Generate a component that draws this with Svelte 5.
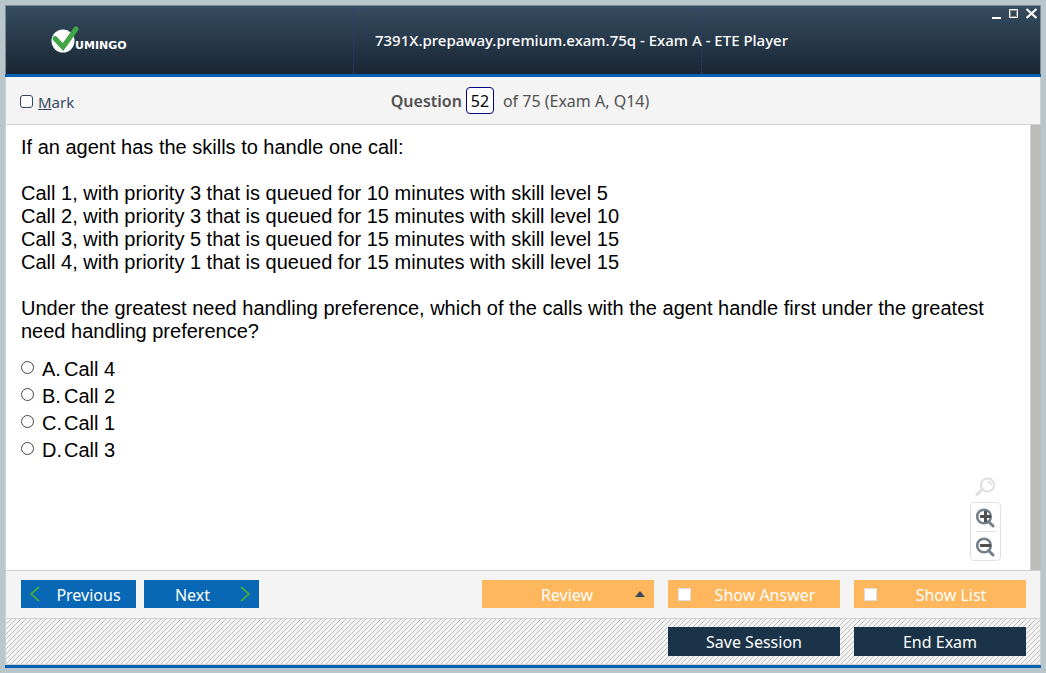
<script>
  let marked = $state(false);
  let question = $state('52');
  let answer = $state('');
  let showAnswer = $state(false);
  let showList = $state(false);

  const choices = [
    { id: 'A', text: 'Call 4' },
    { id: 'B', text: 'Call 2' },
    { id: 'C', text: 'Call 1' },
    { id: 'D', text: 'Call 3' }
  ];
  const calls = [
    'Call 1, with priority 3 that is queued for 10 minutes with skill level 5',
    'Call 2, with priority 3 that is queued for 15 minutes with skill level 10',
    'Call 3, with priority 5 that is queued for 15 minutes with skill level 15',
    'Call 4, with priority 1 that is queued for 15 minutes with skill level 15'
  ];
</script>

<div class="window">
  <header>
    <div class="brand">
      <svg width="30" height="30" viewBox="0 0 30 30" aria-hidden="true">
        <circle cx="12" cy="16" r="11.5" fill="#fff" />
        <path d="M4 13.500 L12 22 L25 4" fill="none" stroke="#43a548" stroke-width="5" stroke-linecap="round" />
      </svg>
      <span class="brand-name">UMINGO</span>
    </div>
    <h1>7391X.prepaway.premium.exam.75q - Exam A - ETE Player</h1>
    <div class="controls">
      <button aria-label="Minimize">
        <svg width="11" height="11" viewBox="0 0 11 11"><path d="M2 10h9" stroke="#fff" stroke-width="2" /></svg>
      </button>
      <button aria-label="Maximize">
        <svg width="11" height="11" viewBox="0 0 11 11"><path d="M1.500 1.500h8v8h-8z" fill="none" stroke="#fff" /><path d="M2.500 2.500h6v6h-6z" fill="none" stroke="#8b8782" /></svg>
      </button>
      <button aria-label="Close">
        <svg width="11" height="11" viewBox="0 0 11 11"><path d="M.5 1l10 9M10.500 1l-10 9" stroke="#fff" stroke-width="2.200" /></svg>
      </button>
    </div>
  </header>

  <div class="question-bar">
    <label class="mark"><input type="checkbox" bind:checked={marked} /><span><u>M</u>ark</span></label>
    <div class="position">
      <label for="question">Question</label>
      <input id="question" type="text" bind:value={question} />
      <span>of 75 (Exam A, Q14)</span>
    </div>
  </div>

  <main>
    <div class="content">
      <p>If an agent has the skills to handle one call:</p>
      <ul>
        {#each calls as call}<li>{call}</li>{/each}
      </ul>
      <p>Under the greatest need handling preference, which of the calls with the agent handle first under the greatest need handling preference?</p>
      <div class="choices" role="radiogroup" aria-label="Answers">
        {#each choices as choice}
          <label><input type="radio" name="answer" value={choice.id} bind:group={answer} /><span class="letter">{choice.id}.</span><span>{choice.text}</span></label>
        {/each}
      </div>
      <div class="zoom">
        <svg width="21" height="20" viewBox="0 0 21 20" aria-hidden="true">
          <circle cx="12.500" cy="8" r="6.600" fill="none" stroke="#dedede" stroke-width="2" />
          <path d="M12.500 4.500q3.500 .5 3.500 3.500" fill="none" stroke="#dedede" stroke-width="1.500" />
          <path d="M7 12.500L2 17.500" stroke="#dedede" stroke-width="3" stroke-linecap="round" />
        </svg>
        <div class="zoom-buttons">
          <button aria-label="Zoom in">
            <svg width="19" height="20" viewBox="0 0 19 20"><circle cx="8" cy="8.500" r="6.800" fill="none" stroke="#73808a" stroke-width="2.600" /><path d="M12.500 13.500l4.500 4.500" stroke="#73808a" stroke-width="3" stroke-linecap="round" /><path d="M4 8.500h11M9.500 3v11" stroke="#505050" stroke-width="3" /></svg>
          </button>
          <button aria-label="Zoom out">
            <svg width="19" height="20" viewBox="0 0 19 20"><circle cx="8" cy="8.500" r="6.800" fill="none" stroke="#73808a" stroke-width="2.600" /><path d="M12.500 13.500l4.500 4.500" stroke="#73808a" stroke-width="3" stroke-linecap="round" /><path d="M4 8.500h11" stroke="#505050" stroke-width="3" /></svg>
          </button>
        </div>
      </div>
    </div>
    <div class="track"></div>
  </main>

  <div class="toolbar">
    <button class="nav previous">
      <svg width="12" height="18" viewBox="0 0 12 18" aria-hidden="true"><path d="M10 2L2 9l8 7" fill="none" stroke="#43a548" stroke-width="2" /></svg>
      <span>Previous</span>
    </button>
    <button class="nav next">
      <span>Next</span>
      <svg width="12" height="18" viewBox="0 0 12 18" aria-hidden="true"><path d="M2 2l8 7-8 7" fill="none" stroke="#43a548" stroke-width="2" /></svg>
    </button>
    <div class="options">
      <button class="option">
        <span>Review</span>
        <svg width="10" height="6" viewBox="0 0 10 6" aria-hidden="true"><path d="M5 0l5 6H0z" fill="#34495e" /></svg>
      </button>
      <label class="option"><input type="checkbox" bind:checked={showAnswer} /><span>Show Answer</span></label>
      <label class="option"><input type="checkbox" bind:checked={showList} /><span>Show List</span></label>
    </div>
  </div>

  <footer>
    <button>Save Session</button>
    <button>End Exam</button>
  </footer>
</div>

<style>
  :global(body) {
    margin: 0;
    background: #b9c6cc;
  }
  * {
    box-sizing: border-box;
  }
  button {
    border: 0;
    padding: 0;
    background: none;
    font: inherit;
    color: inherit;
  }
  svg {
    display: block;
    flex: none;
  }
  .window {
    display: flex;
    flex-direction: column;
    min-height: calc(100vh - 10px);
    margin: 5px;
    font: 16px/20px "Noto Sans", sans-serif;
    background: #f4f4f4;
    border-bottom: 3px solid #0062b1;
  }
  header {
    display: grid;
    grid-template-columns: 1fr auto 1fr;
    align-items: center;
    height: 72px;
    color: #fff;
    --divider: repeating-linear-gradient(#2c3c86 0 1px, transparent 1px 2px);
    background:
      var(--divider) 33.65% 0 / 1px 100% no-repeat,
      var(--divider) 67.25% 0 / 1px 100% no-repeat,
      linear-gradient(#364c60, #192634);
    border-top: 1px solid #7a8b92;
    border-bottom: 3px solid #0062b1;
    box-shadow: inset 1px 0 #7a8b92, inset -1px 0 #7a8b92;
  }
  h1 {
    margin: 0;
    font: 500 15px/20px "Noto Sans", sans-serif;
    padding-left: 117px;
  }
  .brand {
    display: flex;
    align-items: flex-end;
    padding-left: 46px;
  }
  .brand-name {
    font: 700 11px/14px "DejaVu Sans", sans-serif;
    margin: 0 0 2px -6px;
  }
  .controls {
    display: flex;
    align-self: start;
    justify-content: flex-end;
    gap: 7px;
    padding: 2px 4px;
  }
  .question-bar,
  .toolbar,
  footer {
    border: solid #d0d0d0;
    border-width: 0 1px 1px;
  }
  .question-bar {
    display: grid;
    grid-template-columns: 1fr auto 1fr;
    align-items: center;
    height: 48px;
    padding: 0 20px 0 14px;
    color: #505050;
  }
  .mark {
    display: flex;
    align-items: center;
    gap: 5px;
    padding-top: 2px;
    color: #34495e;
    font-size: 15px;
  }
  .question-bar input {
    appearance: none;
    margin: 0;
    background: #fff;
  }
  .mark input {
    width: 13px;
    height: 13px;
    border: 1px solid #34495e;
    border-radius: 3px;
  }
  .position {
    display: flex;
    align-items: center;
    gap: 4px;
  }
  .position label {
    font-weight: 600;
  }
  .position input {
    width: 28px;
    height: 27px;
    padding: 0;
    margin-right: 5px;
    border: 1px solid #000080;
    border-radius: 4px;
    font: inherit;
    text-align: center;
  }
  main {
    display: flex;
    flex: 1;
    border-left: 1px solid #d0d0d0;
    background: #fff;
    border-bottom: 1px solid #d0d0d0;
  }
  .content {
    position: relative;
    flex: 1;
    padding: 11px 15px;
    font: 20px/23px "Liberation Sans", Arial, sans-serif;
    color: #000;
  }
  .track {
    width: 11px;
    background: #bdbcb8;
    border-left: 1px solid #d0d0d0;
  }
  p {
    margin: 0;
  }
  ul {
    list-style: none;
    margin: 23px 0;
    padding: 0;
  }
  .choices {
    display: grid;
    gap: 4px;
    margin-top: 15px;
  }
  .choices label {
    display: flex;
    align-items: center;
  }
  .choices input {
    appearance: none;
    width: 13px;
    height: 13px;
    margin: 0 8px 4px 0;
    border: 1px solid #444;
    border-radius: 50%;
  }
  .letter {
    width: 22px;
  }
  .zoom {
    position: absolute;
    right: 29px;
    bottom: 9px;
    display: grid;
    justify-items: center;
    gap: 5px;
  }
  .zoom-buttons {
    display: grid;
    padding: 0 5px;
    border: 1px solid #e2e2e2;
    border-radius: 4px;
  }
  .zoom-buttons button {
    padding: 5px 0 3px;
  }
  .zoom-buttons button + button {
    border-top: 1px solid #dedede;
  }
  .toolbar {
    display: flex;
    gap: 8px;
    height: 48px;
    padding: 9px 14px 10px 15px;
    color: #fff;
  }
  .nav {
    display: flex;
    align-items: center;
    width: 115px;
    height: 28px;
    padding: 0 8px;
    background: #0868b5;
  }
  .nav span,
  .option span {
    flex: 1;
    padding-top: 2px;
    text-align: center;
  }
  .previous span {
    padding-left: 8px;
  }
  .next span {
    padding-right: 6px;
  }
  .options {
    display: flex;
    gap: 14px;
    margin-left: auto;
  }
  .option {
    display: flex;
    align-items: center;
    width: 172px;
    height: 28px;
    padding: 0 9px;
    background: #ffb75d;
  }
  .option span {
    padding-left: 8px;
  }
  .option input {
    appearance: none;
    width: 13px;
    height: 13px;
    margin: 0 0 0 1px;
    background: #fff;
    border: 1px solid #ddd;
  }
  footer {
    display: flex;
    justify-content: flex-end;
    gap: 14px;
    padding: 8px 14px;
    background: url("data:image/svg+xml,%3Csvg xmlns='http://www.w3.org/2000/svg' width='5' height='5' shape-rendering='crispEdges'%3E%3Cpath d='M4 0h1v1h-1zM3 1h1v1h-1zM2 2h1v1h-1zM1 3h1v1h-1zM0 4h1v1h-1z' fill='%23c0c0c0'/%3E%3C/svg%3E");
  }
  footer button {
    width: 172px;
    height: 29px;
    color: #fff;
    background: #1a3348;
  }
</style>
